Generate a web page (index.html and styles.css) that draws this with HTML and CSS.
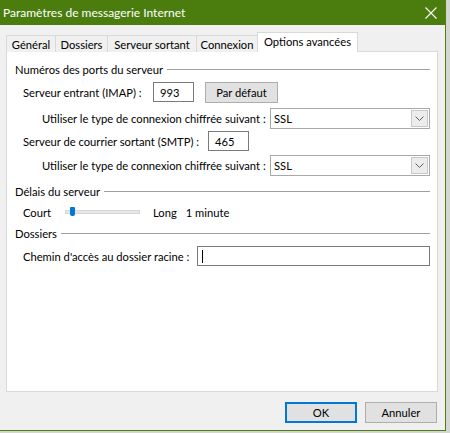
FILE: index.html
```html
<!DOCTYPE html>
<html lang="fr">
<head>
<meta charset="utf-8">
<title>Paramètres de messagerie Internet</title>
<link rel="stylesheet" href="styles.css">
</head>
<body>
<div class="window">
  <div class="titlebar">
    <span class="title">Paramètres de messagerie Internet</span>
    <svg class="close" width="12" height="12" viewBox="0 0 12 12"><path d="M0.5 0.5 L11.5 11.5 M11.5 0.5 L0.5 11.5" stroke="#fff" stroke-width="1.1" fill="none"/></svg>
  </div>
  <div class="content">
    <div class="tabs">
      <div class="tab t1">Général</div>
      <div class="tab t2">Dossiers</div>
      <div class="tab t3">Serveur sortant</div>
      <div class="tab t4">Connexion</div>
      <div class="tab selected t5">Options avancées</div>
    </div>
    <div class="panel">
      <div class="group g1"><span>Numéros des ports du serveur</span><div class="rule"></div></div>
      <div class="row r-imap">
        <span class="lbl lbl-imap">Serveur entrant (IMAP) :</span>
        <div class="input port">993</div>
        <div class="btn btn-default">Par défaut</div>
      </div>
      <div class="row r-enc1">
        <span class="lbl lbl-enc">Utiliser le type de connexion chiffrée suivant :</span>
        <div class="select"><span class="sel-text">SSL</span><span class="arrow"><svg width="9" height="5" viewBox="0 0 9 5"><path d="M0.5 0.5 L4.5 4.5 L8.5 0.5" stroke="#606060" fill="none" stroke-width="1"/></svg></span></div>
      </div>
      <div class="row r-smtp">
        <span class="lbl lbl-smtp">Serveur de courrier sortant (SMTP) :</span>
        <div class="input port">465</div>
      </div>
      <div class="row r-enc2">
        <span class="lbl lbl-enc">Utiliser le type de connexion chiffrée suivant :</span>
        <div class="select"><span class="sel-text">SSL</span><span class="arrow"><svg width="9" height="5" viewBox="0 0 9 5"><path d="M0.5 0.5 L4.5 4.5 L8.5 0.5" stroke="#606060" fill="none" stroke-width="1"/></svg></span></div>
      </div>
      <div class="group g2"><span>Délais du serveur</span><div class="rule"></div></div>
      <div class="row r-slider">
        <span class="lbl lbl-court">Court</span>
        <div class="slider"><div class="track"></div><div class="thumb"></div></div>
        <span class="lbl-long">Long</span>
        <span class="lbl-min">1 minute</span>
      </div>
      <div class="group g3"><span>Dossiers</span><div class="rule"></div></div>
      <div class="row r-path">
        <span class="lbl lbl-path">Chemin d'accès au dossier racine :</span>
        <div class="input path"><span class="caret"></span></div>
      </div>
    </div>
    <div class="footer">
      <div class="btn btn-ok">OK</div>
      <div class="btn btn-cancel">Annuler</div>
    </div>
  </div>
</div>
</body>
</html>
```
FILE: styles.css
```css
html, body {
  margin: 0;
  padding: 0;
}
body {
  width: 450px;
  height: 433px;
  background: #d4d6d2;
  font-family: Lato, "Noto Sans", sans-serif;
  font-size: 11.2px;
  color: #000;
  overflow: hidden;
  white-space: nowrap;
}
.window {
  width: 445px;
  height: 430px;
  border-right: 1px solid #4c7f10;
  border-bottom: 1px solid #4c7f10;
  background: #f0f0f0;
  display: flex;
  flex-direction: column;
}
.titlebar {
  height: 25px;
  background: #4a7d0e;
  color: #fff;
  display: flex;
  align-items: center;
  justify-content: space-between;
  padding: 0 8px 0 3px;
  flex: none;
}
.title {
  font-size: 12px;
}
.close {
  display: block;
}
.content {
  flex: 1;
  display: flex;
  flex-direction: column;
  padding: 7px 7px 0 6px;
}
.tabs {
  display: flex;
  align-items: flex-end;
  height: 20px;
  position: relative;
  z-index: 1;
  margin-bottom: -1px;
}
.tab {
  height: 17px;
  box-sizing: border-box;
  border: 1px solid #d9d9d9;
  border-bottom: none;
  background: #f0f0f0;
  display: flex;
  align-items: center;
  justify-content: center;
  margin-right: -1px;
}
.t1 { width: 50px; }
.t2 { width: 53px; }
.t3 { width: 90px; }
.t4 { width: 62px; }
.tab.selected {
  width: 101px;
  height: 20px;
  background: #fff;
  padding-bottom: 3px;
}
.panel {
  height: 341px;
  box-sizing: border-box;
  width: 432px;
  border: 1px solid #d9d9d9;
  background: #fff;
  padding: 10px 7px 0 8px;
}
.group {
  display: flex;
  align-items: center;
  height: 14px;
}
.group .rule {
  flex: 1;
  height: 1px;
  background: #a0a0a0;
  margin-left: 4px;
}
.g2 { margin-top: 8px; }
.g3 { margin-top: 7px; }
.row {
  display: flex;
  align-items: center;
  height: 20px;
}
.r-imap { margin-top: 6px; }
.r-enc1 { margin-top: 6px; height: 21px; }
.r-smtp { margin-top: 2px; }
.r-enc2 { margin-top: 4px; height: 21px; }
.r-slider { margin-top: 7px; height: 14px; }
.r-path { margin-top: 6px; }
.lbl { flex: none; }
.lbl-imap { width: 130px; margin-left: 8px; }
.lbl-enc { width: 228px; margin-left: 27px; }
.lbl-smtp { width: 185px; margin-left: 8px; }
.lbl-court { width: 42px; margin-left: 8px; }
.lbl-path { width: 174px; margin-left: 8px; }
.input {
  box-sizing: border-box;
  height: 20px;
  border: 1px solid #7a7a7a;
  background: #fff;
  display: flex;
  align-items: center;
  padding-left: 6px;
}
.port { width: 41px; }
.path { flex: 1; padding-left: 4px; }
.caret {
  width: 1px;
  height: 13px;
  background: #000;
}
.btn {
  box-sizing: border-box;
  background: #e1e1e1;
  border: 1px solid #adadad;
  display: flex;
  align-items: center;
  justify-content: center;
}
.btn-default {
  width: 73px;
  height: 21px;
  margin-left: 11px;
}
.select {
  flex: 1;
  box-sizing: border-box;
  height: 21px;
  border: 1px solid #a8a8a8;
  background: #fff;
  display: flex;
  align-items: center;
  justify-content: space-between;
  padding: 0 1px 0 3px;
}
.arrow {
  width: 17px;
  height: 17px;
  box-sizing: border-box;
  border: 1px solid #c8c8c8;
  background: #ececec;
  display: flex;
  align-items: center;
  justify-content: center;
}
.arrow svg { display: block; }
.slider {
  width: 75px;
  height: 14px;
  position: relative;
  flex: none;
}
.track {
  position: absolute;
  left: 0;
  right: 0;
  top: 5px;
  height: 4px;
  box-sizing: border-box;
  background: #e7e7e7;
  border: 1px solid #d6d6d6;
}
.thumb {
  position: absolute;
  left: 5px;
  top: 2px;
  width: 5px;
  height: 9px;
  background: #0078d7;
  border-radius: 1px 1px 2px 2px;
}
.lbl-long { margin-left: 13px; }
.lbl-min { margin-left: 9px; }
.footer {
  display: flex;
  justify-content: flex-end;
  padding: 10px 1px 0 0;
  gap: 8px;
}
.btn-ok, .btn-cancel {
  width: 72px;
  height: 21px;
}
.btn-ok {
  border: 1px solid #0078d7;
  box-shadow: inset 0 0 0 1px #0078d7;
}
```
